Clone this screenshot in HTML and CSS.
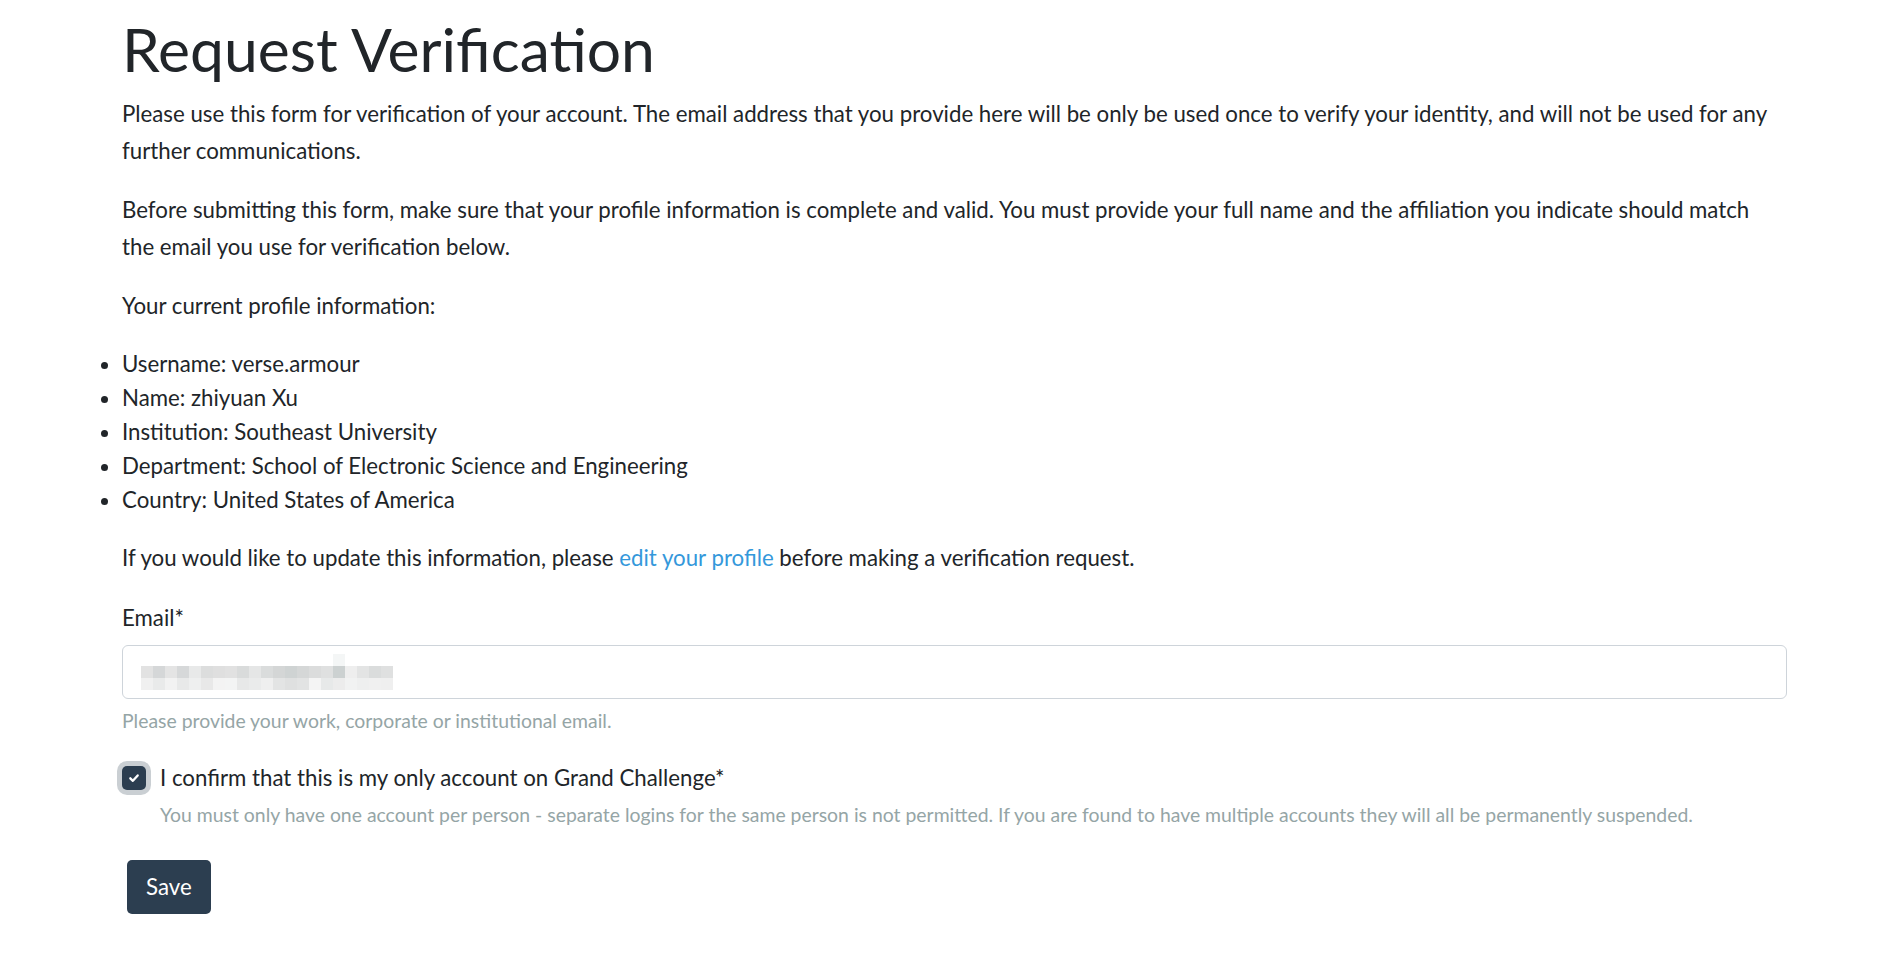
FILE: index.html
```html
<!DOCTYPE html>
<html lang="en">
<head>
<meta charset="utf-8">
<title>Request Verification</title>
<link rel="stylesheet" href="styles.css">
</head>
<body>
<main class="page">
  <h1 class="title">Request Verification</h1>
  <p class="text">Please use this form for verification of your account. The email address that you provide here will be only be used once to verify your identity, and will not be used for any further communications.</p>
  <p class="text">Before submitting this form, make sure that your profile information is complete and valid. You must provide your full name and the affiliation you indicate should match the email you use for verification below.</p>
  <p class="text">Your current profile information:</p>
  <ul class="profile">
    <li>Username: verse.armour</li>
    <li>Name: zhiyuan Xu</li>
    <li>Institution: Southeast University</li>
    <li>Department: School of Electronic Science and Engineering</li>
    <li>Country: United States of America</li>
  </ul>
  <p class="text">If you would like to update this information, please <a class="link" href="#">edit your profile</a> before making a verification request.</p>

  <form class="form">
    <div class="field">
      <label class="label" for="email">Email*</label>
      <div class="input" id="email" role="textbox" aria-label="Email">
        <span class="mosaic" aria-hidden="true"></span>
      </div>
      <small class="help">Please provide your work, corporate or institutional email.</small>
    </div>

    <div class="check">
      <span class="box" aria-hidden="true">
        <svg viewBox="0 0 12 12" width="12" height="12"><path d="M2.3 6.3 L4.9 8.8 L9.7 3.4" fill="none" stroke="#fff" stroke-width="2.3" stroke-linecap="round" stroke-linejoin="round"/></svg>
      </span>
      <label class="check-label">I confirm that this is my only account on Grand Challenge*</label>
      <small class="help check-help">You must only have one account per person - separate logins for the same person is not permitted. If you are found to have multiple accounts they will all be permanently suspended.</small>
    </div>

    <button class="save" type="button">Save</button>
  </form>
</main>
</body>
</html>
```

FILE: styles.css
```css
html, body {
  margin: 0;
  padding: 0;
  background: #ffffff;
}

body {
  font-family: Lato, "Open Sans", "Liberation Sans", sans-serif;
  font-size: 22.25px;
  color: #212529;
}

.page {
  padding: 13px 91px 40px 122px;
}

.title {
  font-size: 60.6px;
  font-weight: 400;
  line-height: 1.2;
  margin: 0 0 10.2px 0;
  color: #212529;
}

.text {
  margin: 0 0 22.6px 0;
  line-height: 36.75px;
}

.profile {
  margin: 22px 0 23.4px 0;
  padding: 0;
  line-height: 33.9px;
}

.profile li {
  list-style: disc;
}

.link {
  color: #3498db;
  text-decoration: none;
}

.form {
  display: flex;
  flex-direction: column;
}

.field {
  display: flex;
  flex-direction: column;
}

.label {
  line-height: 36.75px;
  margin-bottom: 9px;
}

.input {
  box-sizing: border-box;
  height: 54px;
  border: 1px solid #ced4da;
  border-radius: 6px;
  background: #fff;
  padding: 8px 18px;
  display: flex;
  align-items: flex-start;
}

.mosaic {
  display: block;
  width: 252px;
  height: 36px;
  background-repeat: no-repeat;
  background-size: 252px 12px;
  background-position: 0 0, 0 12px, 0 24px;
  background-image:
    linear-gradient(to right, transparent 0 192px, #f4f6f6 192px 204px, transparent 204px),
    linear-gradient(to right, #e2e2e2 0 12px, #d5d7d8 12px 24px, #e4e4e4 24px 36px, #d6d8d9 36px 48px, #e8e9e9 48px 60px, #dcdddd 60px 72px, #dfdfdf 72px 84px, #e1e1e1 84px 96px, #d9dbdb 96px 108px, #e5e6e6 108px 120px, #dadcdc 120px 132px, #d4d6d6 132px 144px, #cfd3d3 144px 156px, #d5d7d7 156px 168px, #dbdcdc 168px 180px, #dfe0e0 180px 192px, #ccd1d1 192px 204px, #eeeeee 204px 216px, #e3e4e4 216px 228px, #dadcdc 228px 240px, #dfe0e0 240px 252px),
    linear-gradient(to right, #f0f0f0 0 12px, #e9eaea 12px 24px, #f2f2f2 24px 36px, #e8e9e9 36px 48px, #eeefef 48px 60px, #e8e8e8 60px 72px, #f3f3f3 72px 84px, #f3f4f4 84px 96px, #e7e8e8 96px 108px, #eaebeb 108px 120px, #efefef 120px 132px, #e3e4e4 132px 144px, #dfe0e0 144px 156px, #e2e3e3 156px 168px, #f4f4f4 168px 180px, #e7e9e9 180px 192px, #ececec 192px 204px, #f1f2f2 204px 216px, #eeefef 216px 228px, #f0f0f0 228px 240px, #efefef 240px 252px);
}

.help {
  display: block;
  font-size: 19.4px;
  line-height: 29.4px;
  color: #95a5a6;
  margin-top: 7px;
}

.check {
  display: grid;
  grid-template-columns: 38px 1fr;
  align-items: center;
  margin-top: 24.2px;
}

.box {
  width: 24px;
  height: 24px;
  border-radius: 5px;
  background: #2c3e50;
  box-shadow: 0 0 0 5px rgba(44, 62, 80, 0.25);
  display: flex;
  align-items: center;
  justify-content: center;
  align-self: center;
}

.check-label {
  line-height: 36.75px;
}

.check-help {
  grid-column: 2;
  margin-top: 3px;
}

.save {
  align-self: flex-start;
  margin: 30.5px 0 0 5px;
  background: #2c3e50;
  color: #ffffff;
  border: 0;
  border-radius: 5px;
  font-family: Lato, "Open Sans", "Liberation Sans", sans-serif;
  font-size: 22.25px;
  line-height: 33.6px;
  padding: 10.2px 19px;
}
```
